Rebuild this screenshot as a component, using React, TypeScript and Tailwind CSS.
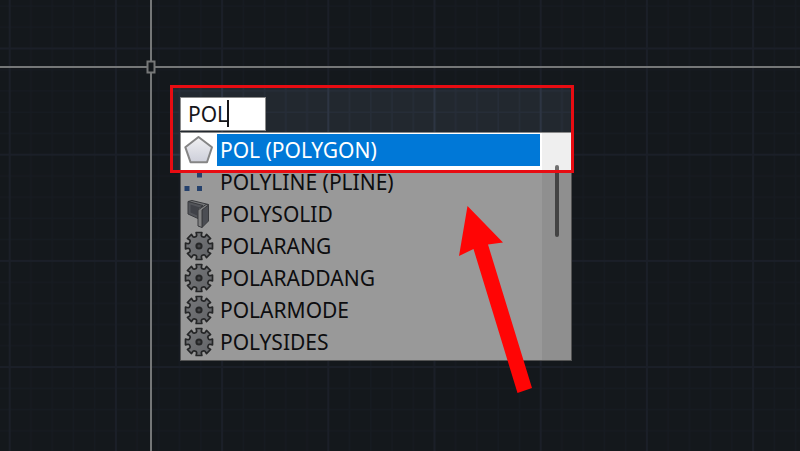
import { useState } from "react";

const commands = [
  { label: "POL (POLYGON)", icon: "polygon" },
  { label: "POLYLINE (PLINE)", icon: "polyline" },
  { label: "POLYSOLID", icon: "solid" },
  { label: "POLARANG", icon: "gear" },
  { label: "POLARADDANG", icon: "gear" },
  { label: "POLARMODE", icon: "gear" },
  { label: "POLYSIDES", icon: "gear" },
];

// eight teeth around the rim, slightly flared at the tip
function gearPath() {
  const points: string[] = [];
  for (let i = 0; i < 8; i++) {
    const mid = i * 45 - 90;
    const tooth = [
      [mid - 16, 10],
      [mid - 12, 11],
      [mid - 12, 13.8],
      [mid + 12, 13.8],
      [mid + 12, 11],
      [mid + 16, 10],
    ];
    for (const [deg, r] of tooth) {
      const a = (deg * Math.PI) / 180;
      points.push(`${(15 + r * Math.cos(a)).toFixed(2)} ${(15 + r * Math.sin(a)).toFixed(2)}`);
    }
  }
  return `M${points.join("L")}Z`;
}

function CommandIcon({ name }: { name: string }) {
  return (
    <svg viewBox="0 0 30 30" className="size-[30px]" aria-hidden="true">
      {name === "polygon" && (
        <>
          <defs>
            <linearGradient id="polygon-fill" x1="0" y1="0" x2="0" y2="1">
              <stop offset="0" stopColor="#f0f0f2" />
              <stop offset="1" stopColor="#cdcfda" />
            </linearGradient>
          </defs>
          <path d="M14.500 2L28 12.200L23 27.200H6.500L1.300 12.200Z" fill="url(#polygon-fill)" stroke="#858585" strokeWidth="2" strokeLinejoin="round" />
        </>
      )}
      {name === "polyline" && (
        <g fill="#3f6db5">
          <rect x="13" y="5.500" width="5" height="5" />
          <rect x="0.500" y="19" width="5" height="5" />
          <rect x="13" y="19" width="5" height="5" />
        </g>
      )}
      {name === "solid" && (
        <g stroke="#5f6167" strokeWidth="1" strokeLinejoin="round">
          <path d="M4 2.500L8 1.500L24.500 5.500L20 8Z" fill="#c4c6ca" />
          <path d="M4 2.500L19 6.500L14 10V19.500L4 15Z" fill="#8b8e97" />
          <path d="M6.500 5.500L16 8.500L13 11V16.500L6.500 13.500Z" fill="#6c6f78" stroke="none" />
          <path d="M18 11L24.500 6V22L18 28.500Z" fill="#7e818a" />
          <path d="M14 11L22 5.500L24.500 6L18 11V28.500L14 27Z" fill="#d5d6d8" />
        </g>
      )}
      {name === "gear" && (
        <>
          <defs>
            <linearGradient id="gear-fill" x1="0" y1="0" x2="1" y2="1">
              <stop offset="0" stopColor="#c6c8cc" />
              <stop offset="1" stopColor="#a2a5ab" />
            </linearGradient>
          </defs>
          <path d={gearPath()} fill="url(#gear-fill)" stroke="#3f4042" strokeWidth="1.700" strokeLinejoin="round" />
          <circle cx="15" cy="15" r="2.600" fill="#77797d" stroke="#3f4042" strokeWidth="2" />
        </>
      )}
    </svg>
  );
}

function Canvas() {
  const minor = [1, 2, 3, 4];
  return (
    <svg className="absolute inset-0 size-full" aria-hidden="true">
      <defs>
        <pattern id="grid" x="7.700" y="46.500" width="106.200" height="106.200" patternUnits="userSpaceOnUse">
          {minor.map((n) => (
            <path key={n} d={`M${2 + n * 21.24} 0V106.2M0 ${2 + n * 21.24}H106.2`} stroke="#262d38" strokeWidth="1.5" />
          ))}
          <path d="M2 0V106.2M0 2H106.2" stroke="#2d3543" strokeWidth="2" />
        </pattern>
      </defs>
      <rect width="100%" height="100%" fill="#22282f" />
      <rect width="100%" height="100%" fill="url(#grid)" />
      <g fill="#c4c6c8">
        <rect x="150" width="2" height="100%" />
        <rect y="66" width="100%" height="2" />
      </g>
      <rect x="147.5" y="61.5" width="7" height="11" fill="#22282f" stroke="#c4c6c8" strokeWidth="2" />
    </svg>
  );
}

export default function App() {
  const [value, setValue] = useState("POL");
  const [selected, setSelected] = useState(0);

  return (
    <main className="relative min-h-screen overflow-hidden bg-[#22282f] font-['Noto_Sans','Open_Sans',sans-serif] text-[21px] leading-8 text-[#16161a]">
      <Canvas />

      {/* Dynamic input, anchored next to the cursor */}
      <div className="absolute left-[180px] top-[97px] w-[392px]">
        <div className="relative w-[86px]">
          <input
            type="text"
            aria-label="Command"
            value={value}
            onChange={(e) => setValue(e.target.value)}
            className="block h-[34px] w-full border border-[#8a8a8a] bg-white pl-[7px] caret-transparent outline-none"
          />
          <span className="absolute left-[47px] top-[3px] h-[27px] w-0.5 bg-[#16161a]" />
        </div>

        <div className="mt-px flex border border-[#8a8a8a] bg-white">
          <ul className="flex-1 pt-px pb-0.5">
            {commands.map((command, index) => (
              <li key={command.label}>
                <button type="button" onClick={() => setSelected(index)} className="flex w-full pr-0.5 text-left">
                  <span className="flex w-9 items-center pl-[3px]">
                    <CommandIcon name={command.icon} />
                  </span>
                  <span className={index === selected ? "h-8 flex-1 bg-[#0078d7] pl-[3px] text-white" : "h-8 flex-1 pl-[3px]"}>
                    {command.label}
                  </span>
                </button>
              </li>
            ))}
          </ul>
          <div className="flex w-[29px] justify-center bg-[#efefef] pt-8">
            <div className="h-[72px] w-1 rounded-full bg-[#717171]" />
          </div>
        </div>

        {/* Spotlight frame, everything outside is dimmed */}
        <div className="pointer-events-none absolute -left-[10px] -right-0.5 -top-3 h-[88px] border-3 border-[#e80c12] shadow-[0_0_0_4000px_rgba(0,0,0,0.4)]" />
      </div>

      <svg viewBox="0 0 74 188" className="pointer-events-none absolute left-[459px] top-[206px] h-[188px] w-[74px]" aria-hidden="true">
        <path d="M8.500 0L44 36.500L29 38.500L73 182L58.500 187L14.500 43L0 50Z" fill="#ff0505" />
      </svg>
    </main>
  );
}
